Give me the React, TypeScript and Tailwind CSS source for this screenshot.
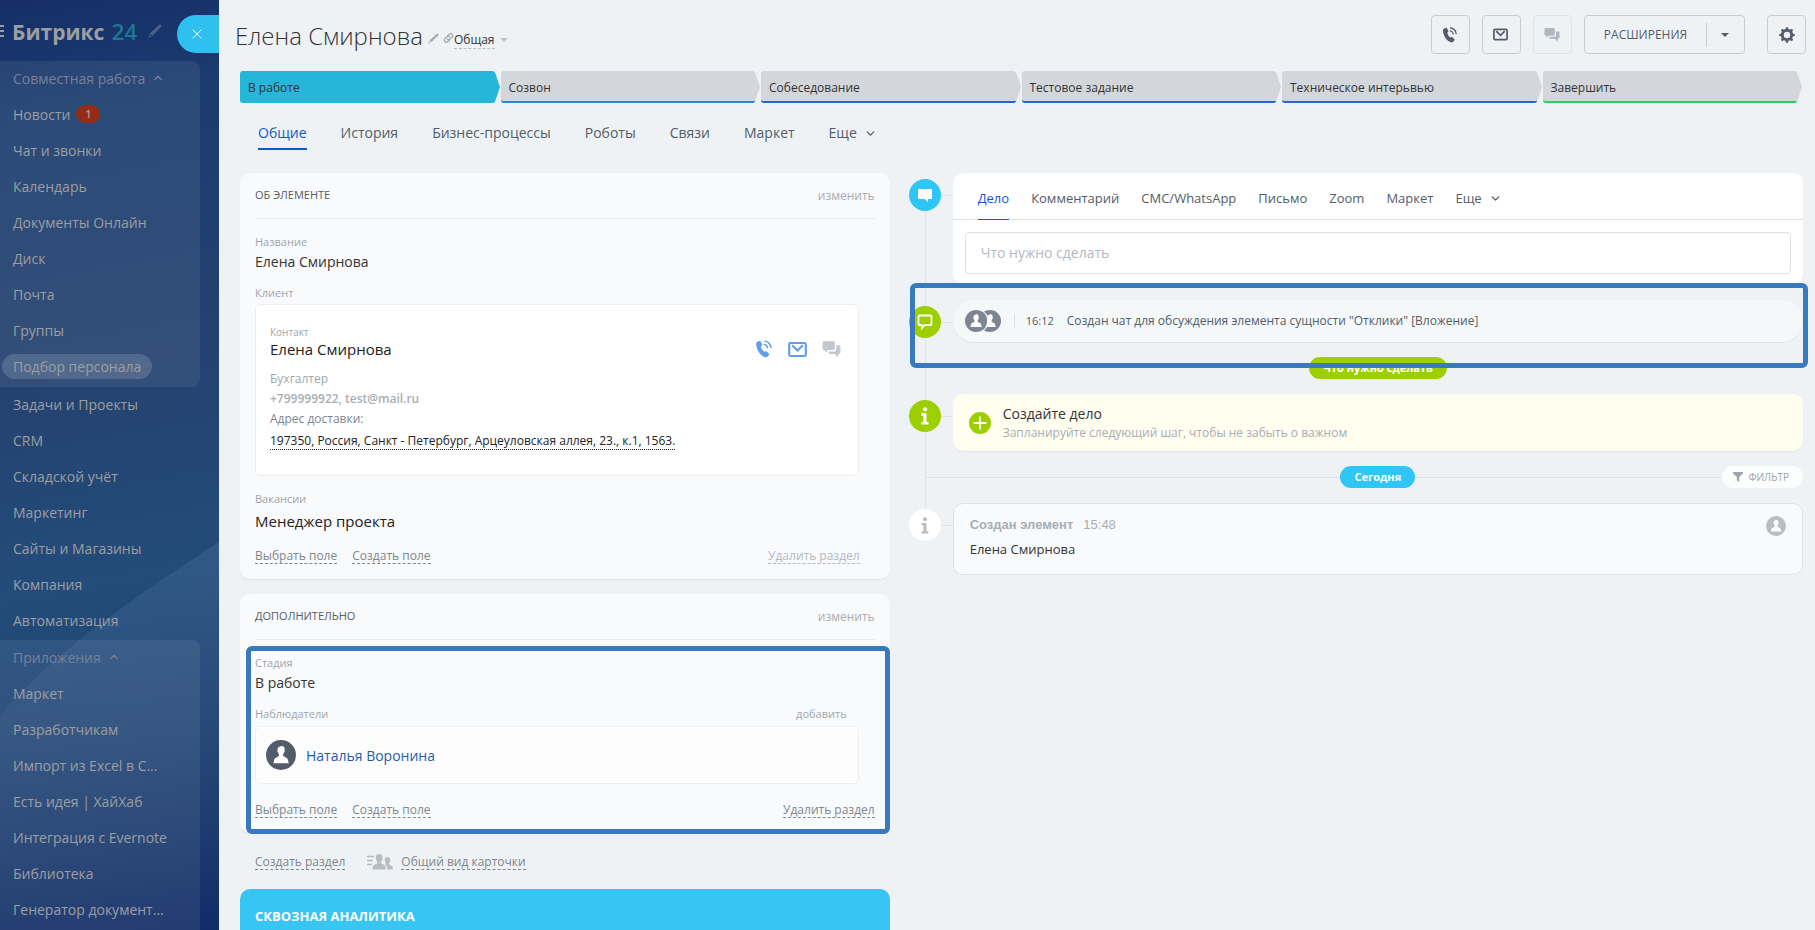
import type { ReactNode } from "react";
import { ChevronDown, ChevronUp, X } from "lucide-react";

type IconProps = { className?: string };

function PhoneIcon({ className }: IconProps) {
  return (
    <svg viewBox="0 0 16 16" className={className} aria-hidden="true">
      <path
        fill="currentColor"
        d="M2.200 1.600 4 .9c.4-.1.8 0 1 .4l1.300 2.500c.2.4.1.9-.2 1.200l-.9.7c.4 1.700 1.700 3.800 3.100 4.800l1-.5c.4-.2.9-.1 1.200.2l1.900 2.100c.3.3.3.8 0 1.100l-1.300 1.400c-.5.5-1.300.7-2 .5C4.900 14.200 1.300 8.900 1 3.700c0-.9.4-1.700 1.200-2.100z"
      />
      <path d="M8.300 3.900c1.500.3 2.600 1.500 2.900 3M8.600 1c2.900.4 5.100 2.600 5.500 5.500" fill="none" stroke="currentColor" strokeWidth="1.300" strokeLinecap="round" />
    </svg>
  );
}

function MailIcon({ className }: IconProps) {
  return (
    <svg viewBox="0 0 16 16" className={className} aria-hidden="true">
      <rect x="1" y="2.500" width="14" height="11" rx="1.200" fill="none" stroke="currentColor" strokeWidth="1.800" />
      <path d="m3.500 4.500 4.500 4.300 4.500-4.300" fill="none" stroke="currentColor" strokeWidth="1.800" />
    </svg>
  );
}

function ChatsIcon({ className }: IconProps) {
  return (
    <svg viewBox="0 0 16 16" className={className} aria-hidden="true">
      <path
        fill="currentColor"
        d="M1.600 1h8c.7 0 1.200.5 1.200 1.200v5c0 .7-.5 1.200-1.200 1.200H5L2.500 10.800V8.400h-.9C1 8.400.5 7.900.5 7.200v-5C.5 1.500 1 1 1.600 1z"
      />
      <path fill="currentColor" d="M12 4.400h2.300c.7 0 1.200.5 1.200 1.200v5c0 .7-.5 1.200-1.200 1.200h-.8v2.900l-2.700-2.900H6.700c-.7 0-1.200-.5-1.200-1.200v-.9h5.300c.7 0 1.200-.5 1.200-1.200z" />
    </svg>
  );
}

function GearIcon({ className }: IconProps) {
  const teeth = [0, 45, 90, 135, 180, 225, 270, 315];
  return (
    <svg viewBox="0 0 16 16" className={className} aria-hidden="true">
      <circle cx="8" cy="8" r="4.700" fill="none" stroke="currentColor" strokeWidth="2.900" />
      {teeth.map((a) => (
        <path key={a} d="M6.500 2.600 7 .3h2l.5 2.300z" fill="currentColor" transform={`rotate(${a} 8 8)`} />
      ))}
    </svg>
  );
}

function PencilIcon({ className }: IconProps) {
  return (
    <svg viewBox="0 0 14 14" className={className} aria-hidden="true">
      <path fill="currentColor" d="M11.200.8c.4-.4 1-.4 1.400 0l.6.6c.4.4.4 1 0 1.400L4.300 11.700 1.700 9.700zM1 10.600l2.300 1.900L.5 13.500z" />
    </svg>
  );
}

function LinkIcon({ className }: IconProps) {
  return (
    <svg viewBox="0 0 12 12" className={className} aria-hidden="true">
      <g fill="none" stroke="currentColor" strokeWidth="1.500" strokeLinecap="round">
        <path d="M5 3.600 6.700 1.900a2.200 2.200 0 0 1 3.200 0 2.200 2.200 0 0 1 0 3.200L7.800 7.200a2.200 2.200 0 0 1-3 0" />
        <path d="M7 8.300 5.300 10a2.200 2.200 0 0 1-3.200 0 2.200 2.200 0 0 1 0-3.200l2.100-2.100a2.200 2.200 0 0 1 3 0" />
      </g>
    </svg>
  );
}

function Avatar({ className }: IconProps) {
  return (
    <svg viewBox="0 0 30 30" className={className} aria-hidden="true">
      <circle cx="15" cy="15" r="15" fill="currentColor" />
      <path
        fill="#fff"
        d="M14.200 6.400c.5-.6 2-.7 2.900-.2 1 .5 1.500 1.400 1.500 2.500 0 .7-.1 1.300-.1 1.800.5.400.4 1.300-.3 1.800-.2.8-.6 1.400-1.100 1.900v1.400c.3.8 1.100 1.100 2.200 1.600 1.600.7 2.300 1.300 2.600 2.500l.9 3.500H7.400l.8-3.500c.3-1.200 1-1.800 2.600-2.500 1.100-.5 1.900-.8 2.200-1.600v-1.400c-.5-.5-.9-1.100-1.100-1.900-.7-.5-.8-1.400-.3-1.800-.2-1.900 0-3.700 2.600-4.100z"
      />
    </svg>
  );
}

function PeopleListIcon({ className }: IconProps) {
  return (
    <svg viewBox="0 0 26 18" className={className} aria-hidden="true">
      <path d="M0 3.500h7M0 7.500h6M0 11.500h5" stroke="currentColor" strokeWidth="1.500" />
      <path fill="currentColor" d="M12.200 1c-2 0-3.400 1.200-3.400 3.300 0 2.200.7 3.700 1.500 4.600.3 1.600-.8 1.900-2.400 2.600-1.700.7-2.400 2.400-2.500 5h13.600c-.1-2.600-.8-4.300-2.500-5-1.600-.7-2.700-1-2.400-2.600.8-.9 1.500-2.400 1.500-4.600C15.600 2.200 14.200 1 12.200 1z" />
      <path fill="currentColor" d="M20.500 4c1.700 0 2.800 1 2.800 2.800 0 1.700-.5 2.800-1.200 3.500-.2 1.300.6 1.600 1.900 2.100 1.400.5 2 1.900 2 4.100h-5.600c-.1-2.300-.9-4-2.600-4.900 1-.5 1-1 .9-1.500-.6-.6-1-1.700-1-3.300C17.700 5 18.800 4 20.500 4z" />
    </svg>
  );
}

function InfoIcon({ className }: IconProps) {
  return (
    <svg viewBox="0 0 10 18" className={className} aria-hidden="true">
      <circle cx="5" cy="2.300" r="2.100" fill="currentColor" />
      <path fill="currentColor" d="M1.300 6.300h5.200v8.800h2v2.400H1.300v-2.400h2V8.700h-2z" />
    </svg>
  );
}

function SectionHeading({ title }: { title: string }) {
  return (
    <div className="flex h-[46px] items-center justify-between border-b border-[#e6e9ec]">
      <h2 className="text-[11px] font-medium text-[#535c69]">{title}</h2>
      <button type="button" className="text-[12px] text-[#a8adb4]">изменить</button>
    </div>
  );
}

function Dashed({ children, className = "text-[#80868e]" }: { children: ReactNode; className?: string }) {
  return (
    <a href="#" className={`border-b border-dashed border-current text-[12px] leading-[15px] ${className}`}>
      {children}
    </a>
  );
}

const collab = ["Новости", "Чат и звонки", "Календарь", "Документы Онлайн", "Диск", "Почта", "Группы"];
const general = ["Задачи и Проекты", "CRM", "Складской учёт", "Маркетинг", "Сайты и Магазины", "Компания", "Автоматизация"];
const apps = ["Маркет", "Разработчикам", "Импорт из Excel в С...", "Есть идея | ХайХаб", "Интеграция с Evernote", "Библиотека", "Генератор документ..."];

function MenuLink({ label, badge }: { label: string; badge?: string }) {
  return (
    <a href="#" className="flex h-9 items-center gap-[6px] pb-[2px] pl-[13px]">
      {label}
      {badge && (
        <span className="flex h-[18px] w-6 items-center justify-center rounded-full bg-[#962c14] text-[11px] font-semibold">{badge}</span>
      )}
    </a>
  );
}

function Sidebar() {
  return (
    <aside className="relative w-[219px] shrink-0 overflow-hidden bg-[linear-gradient(170deg,#162e68_0%,#1a3c6e_12%,#24426f_40%,#234c7b_62%,#1e4170_80%,#122c66_100%)] text-[14px] font-medium text-[#9d9ea0]">
      <svg viewBox="0 0 219 930" preserveAspectRatio="none" className="absolute inset-0 h-full w-full" aria-hidden="true">
        <defs>
          <linearGradient id="glow" x1="0" y1="0" x2="0" y2="1">
            <stop offset="0" stopColor="#8fb0d8" stopOpacity=".13" />
            <stop offset="1" stopColor="#8fb0d8" stopOpacity="0" />
          </linearGradient>
        </defs>
        <path d="M219 542C130 600 50 655 0 716v214h219z" fill="url(#glow)" />
      </svg>
      <div className="relative">
        <div className="flex h-[61px] items-center">
          <button type="button" aria-label="Меню" className="flex h-3 w-1 flex-col justify-between">
            <span className="h-[2px] bg-current" />
            <span className="h-[2px] bg-current" />
            <span className="h-[2px] bg-current" />
          </button>
          <a href="#" className="ml-2 pt-[2px] text-[21px] font-bold">
            Битрикс <span className="ml-[2px] text-[22px] font-semibold text-[#1d7895]">24</span>
          </a>
          <PencilIcon className="ml-[11px] h-[14px] w-[14px] text-[#4c6288]" />
        </div>
        <button type="button" aria-label="Закрыть" className="absolute top-[15px] right-0 flex h-[38px] w-[42px] items-center justify-center rounded-l-full bg-[#2fc0f0] pr-[2px] text-white">
          <X size={16} strokeWidth={1.500} />
        </button>
        <nav>
          <div className="mr-[19px] rounded-r-lg bg-white/7 pb-[2px]">
            <button type="button" className="flex h-9 items-center gap-[6px] pb-[2px] pl-[13px] font-normal text-[#75819a]">
              Совместная работа <ChevronUp size={14} />
            </button>
            {collab.map((l) => (
              <MenuLink key={l} label={l} badge={l === "Новости" ? "1" : undefined} />
            ))}
            <div className="flex h-9 items-center pb-[2px] pl-[2px]">
              <a href="#" aria-current="page" className="flex h-[25px] items-center rounded-full bg-white/15 px-[11px]">
                Подбор персонала
              </a>
            </div>
          </div>
          {general.map((l) => (
            <MenuLink key={l} label={l} />
          ))}
          <div className="mt-px mr-[19px] rounded-tr-lg bg-white/7 pb-9">
            <button type="button" className="flex h-9 items-center gap-[6px] pb-[2px] pl-[13px] font-normal text-[#75819a]">
              Приложения <ChevronUp size={14} />
            </button>
            {apps.map((l) => (
              <MenuLink key={l} label={l} />
            ))}
          </div>
        </nav>
      </div>
    </aside>
  );
}

const stages = [
  { name: "В работе", fill: "#25b6d9", line: "#25b6d9" },
  { name: "Созвон", fill: "#d3d7dc", line: "#2b85d6" },
  { name: "Собеседование", fill: "#d3d7dc", line: "#2566d0" },
  { name: "Тестовое задание", fill: "#d3d7dc", line: "#2566d0" },
  { name: "Техническое интерьвью", fill: "#d3d7dc", line: "#2566d0" },
  { name: "Завершить", fill: "#d3d7dc", line: "#2bcf5c" },
];

function Stages() {
  return (
    <ol className="mr-px grid h-8 grid-cols-6 gap-px text-[12px] text-[#333]">
      {stages.map((s) => (
        <li key={s.name} className="min-w-0">
          <button type="button" className="flex h-full w-full text-left">
            <span className="flex h-8 min-w-0 flex-1 items-center truncate rounded-l-[3px] border-b-2 pt-[3px] pl-2" style={{ backgroundColor: s.fill, borderColor: s.line }}>
              {s.name}
            </span>
            <svg viewBox="0 0 8 32" className="h-8 w-2 shrink-0" aria-hidden="true">
              <path d="M0 0c2 0 3 1 3.600 3L8 16 3.600 29C3 31 2 32 0 32z" fill={s.fill} />
              <path d="M0 30h3.200C2.600 31.400 1.600 32 0 32z" fill={s.line} />
            </svg>
          </button>
        </li>
      ))}
    </ol>
  );
}

const toolButton = "flex h-[39px] w-[39px] items-center justify-center rounded border text-[#535c69]";

function Header() {
  return (
    <header className="-mr-[3px] flex h-[71px] items-start justify-between pt-[15px]">
      <div className="-ml-[5px] flex items-center pt-[3px]">
        <h1 className="text-[24px] leading-[36px] font-light text-[#333]">Елена Смирнова</h1>
        <button type="button" aria-label="Переименовать" className="mt-[4px] ml-[5px] text-[#a8adb4]"><PencilIcon className="h-[11px] w-[11px]" /></button>
        <button type="button" aria-label="Скопировать ссылку" className="mt-[4px] ml-[4px] text-[#a8adb4]"><LinkIcon className="h-[12px] w-[11px]" /></button>
        <button type="button" className="mt-[7px] flex items-center gap-[5px] text-[12px] leading-[17px] text-[#333]">
          <span className="border-b border-dashed border-[#b8bdc4]">Общая</span>
          <svg viewBox="0 0 8 4" className="h-1 w-2 text-[#c0c5cb]" aria-hidden="true"><path d="M0 0h8L4 4z" fill="currentColor" /></svg>
        </button>
      </div>
      <div className="flex gap-3">
        <button type="button" aria-label="Позвонить" className={`${toolButton} border-[#c6cdd3] pr-[2px]`}><PhoneIcon className="h-4 w-4" /></button>
        <button type="button" aria-label="Написать письмо" className={`${toolButton} border-[#c6cdd3] pr-[2px]`}><MailIcon className="h-[15px] w-[15px]" /></button>
        <button type="button" aria-label="Чат" disabled className={`${toolButton} border-[#dfe3e7] pr-[2px]`}><ChatsIcon className="h-4 w-4 text-[#b0b6bd]" /></button>
        <div className="mr-[10px] flex h-[39px] w-[161px] items-center rounded border border-[#c6cdd3] text-[#535c69]">
          <button type="button" className="h-full flex-1 text-[12px]">РАСШИРЕНИЯ</button>
          <span className="h-6 w-px bg-[#c6cdd3]" />
          <button type="button" aria-label="Ещё" className="flex h-full w-[37px] items-center justify-center pr-[2px]">
            <svg viewBox="0 0 8 4" className="h-1 w-2" aria-hidden="true"><path d="M0 0h8L4 4z" fill="currentColor" /></svg>
          </button>
        </div>
        <button type="button" aria-label="Настройки" className={`${toolButton} border-[#c6cdd3]`}><GearIcon className="h-4 w-4" /></button>
      </div>
    </header>
  );
}

const tabs = ["Общие", "История", "Бизнес-процессы", "Роботы", "Связи", "Маркет"];

function PageTabs() {
  return (
    <nav className="flex gap-[34px] pt-5 pl-[18px] text-[14px] leading-[20px] text-[#535c69]">
      {tabs.map((t, i) => (
        <a key={t} href="#" className={`h-[27px] border-b-2 ${i === 0 ? "border-[#1058d0] text-[#1058d0]" : "border-transparent"}`}>
          {t}
        </a>
      ))}
      <button type="button" className="flex h-5 items-center gap-[7px]">Еще <ChevronDown size={13} strokeWidth={2.500} /></button>
    </nav>
  );
}

const fieldLabel = "text-[11px] leading-[16px] text-[#a0a5ad]";

function AboutCard() {
  return (
    <section className="rounded-[10px] bg-[#f9fafb] px-[15px] pb-[15px] shadow-[0_1px_1px_rgba(0,0,0,0.06)]">
      <SectionHeading title="ОБ ЭЛЕМЕНТЕ" />
      <p className={`mt-[15px] ${fieldLabel}`}>Название</p>
      <p className="mt-[2px] text-[14px] leading-[20px] text-[#333]">Елена Смирнова</p>
      <p className={`mt-[13px] ${fieldLabel}`}>Клиент</p>
      <div className="mt-[3px] mr-4 h-[172px] rounded-[5px] border border-[#edeff1] bg-white px-[14px] pt-[20px]">
        <p className="text-[10px] leading-[14px] text-[#a0a5ad]">Контакт</p>
        <div className="flex items-center justify-between">
          <a href="#" className="text-[15px] leading-[20px] text-[#222]">Елена Смирнова</a>
          <div className="flex items-center gap-[15px] pr-[3px]">
            <button type="button" aria-label="Позвонить" className="text-[#5f9ee8]"><PhoneIcon className="h-[18px] w-[18px]" /></button>
            <button type="button" aria-label="Написать письмо" className="text-[#5f9ee8]"><MailIcon className="h-[19px] w-[19px]" /></button>
            <button type="button" aria-label="Чат" disabled className="text-[#c3c8cd]"><ChatsIcon className="h-[19px] w-[19px]" /></button>
          </div>
        </div>
        <p className="mt-[10px] text-[12px] leading-[20px] text-[#a0a5ad]">Бухгалтер</p>
        <p className="text-[12px] leading-[20px] font-semibold text-[#a8adb4]">+799999922, test@mail.ru</p>
        <p className="text-[12px] leading-[20px] text-[#80868e]">Адрес доставки:</p>
        <p className="mt-[4px] text-[12px] leading-[15px] text-[#222]">
          <a href="#" className="border-b border-dotted border-current">197350, Россия, Санкт - Петербург, Арцеуловская аллея, 23., к.1, 1563.</a>
        </p>
      </div>
      <p className={`mt-[15px] ${fieldLabel}`}>Вакансии</p>
      <p className="mt-1 text-[15px] leading-[20px] text-[#222]">Менеджер проекта</p>
      <div className="mt-[17px] flex gap-[15px]">
        <Dashed>Выбрать поле</Dashed>
        <Dashed>Создать поле</Dashed>
        <Dashed className="mr-[15px] ml-auto text-[#b4b9bf]">Удалить раздел</Dashed>
      </div>
    </section>
  );
}

function ExtraCard() {
  return (
    <section className="relative mt-[15px] rounded-[10px] bg-[#f9fafb] px-[15px] pb-[15px] shadow-[0_1px_1px_rgba(0,0,0,0.06)]">
      <SectionHeading title="ДОПОЛНИТЕЛЬНО" />
      <p className={`mt-[15px] ${fieldLabel}`}>Стадия</p>
      <p className="mt-[2px] text-[14px] leading-[20px] text-[#333]">В работе</p>
      <div className={`mt-[13px] mr-7 flex justify-between ${fieldLabel}`}>
        <p>Наблюдатели</p>
        <button type="button">добавить</button>
      </div>
      <div className="mt-[4px] mr-4 flex h-[58px] items-center gap-[10px] rounded-[5px] border border-[#edeff1] bg-[#fdfdfd] px-[10px]">
        <Avatar className="h-[30px] w-[30px] text-[#535c69]" />
        <a href="#" className="text-[14px] text-[#1f5cad]">Наталья Воронина</a>
      </div>
      <div className="mt-[18px] flex gap-[15px]">
        <Dashed>Выбрать поле</Dashed>
        <Dashed>Создать поле</Dashed>
        <Dashed className="ml-auto text-[#80868e]">Удалить раздел</Dashed>
      </div>
      <div className="pointer-events-none absolute top-[52px] right-0 -bottom-px left-[6px] rounded-[6px] border-[5px] border-[#3979be]" />
    </section>
  );
}

function TimelineRow({ icon, tone, children, className }: { icon: ReactNode; tone: string; children: ReactNode; className: string }) {
  return (
    <div className={`flex items-start ${className}`}>
      <span className={`mt-[6px] flex h-8 w-8 shrink-0 items-center justify-center rounded-full ${tone}`}>{icon}</span>
      <span className="mt-[22px] h-px w-3 shrink-0 bg-[#dfe3e7]" />
      {children}
    </div>
  );
}

const activityTabs = ["Дело", "Комментарий", "СМС/WhatsApp", "Письмо", "Zoom", "Маркет"];

function Timeline() {
  return (
    <div className="relative -ml-px">
      <div className="absolute top-6 left-4 h-[316px] w-px bg-[#dfe3e7]" />
      <div className="relative">
        <TimelineRow
          className="h-[110px]"
          tone="bg-[#2fc6f6] text-white"
          icon={<svg viewBox="0 0 14 13" className="h-[13px] w-[14px]" aria-hidden="true"><path d="M1 0h12c.6 0 1 .4 1 1v8c0 .6-.4 1-1 1h-3v3L6.500 10H1c-.6 0-1-.4-1-1V1c0-.6.4-1 1-1z" fill="currentColor" /></svg>}
        >
          <section className="min-w-0 flex-1 rounded-[10px] bg-white pb-[10px]">
            <nav className="flex h-[47px] gap-[22px] border-b border-[#dfe3e7] pl-[25px] text-[13px] text-[#535c69]">
              {activityTabs.map((t, i) => (
                <a key={t} href="#" className={`-mb-px flex items-center border-b pt-[5px] ${i === 0 ? "border-[#1058d0] text-[#1058d0]" : "border-transparent"}`}>{t}</a>
              ))}
              <button type="button" className="flex items-center gap-[7px] pt-[5px]">Еще <ChevronDown size={13} strokeWidth={2.500} /></button>
            </nav>
            <div className="px-3 pt-3">
              <input aria-label="Что нужно сделать" placeholder="Что нужно сделать" className="h-[42px] w-full rounded border border-[#dcdfe3] px-[15px] pb-[2px] text-[14px] placeholder:text-[#b4b9bf]" />
            </div>
          </section>
        </TimelineRow>

        <TimelineRow
          className="relative pt-[17px]"
          tone="bg-[#9dcf00] text-white"
          icon={<svg viewBox="0 0 16 16" className="h-4 w-4" aria-hidden="true"><path d="M2.500 1.500h11c.6 0 1 .4 1 1v7.600c0 .6-.4 1-1 1H7.300L5 14v-2.900H2.500c-.6 0-1-.4-1-1V2.500c0-.6.4-1 1-1z" fill="none" stroke="currentColor" strokeWidth="1.800" /></svg>}
        >
          <div className="flex h-[42px] min-w-0 flex-1 items-center rounded-full bg-[#f5f8f9] pl-3 text-[12px] text-[#535c69] shadow-[0_1px_1px_rgba(0,0,0,0.06)]">
            <div className="flex">
              <span className="z-10 rounded-full border-r-2 border-[#f5f8f9]"><Avatar className="h-[22px] w-[22px] text-[#7c8591]" /></span>
              <Avatar className="-ml-[10px] h-[22px] w-[22px] text-[#7c8591]" />
            </div>
            <span className="ml-[13px] h-[14px] w-px bg-[#dfe3e7]" />
            <time className="ml-[11px] text-[11px]">16:12</time>
            <p className="ml-[13px]">Создан чат для обсуждения элемента сущности "Отклики" [Вложение]</p>
          </div>
          <div className="pointer-events-none absolute top-0 -right-[5px] -bottom-[26px] left-px z-20 rounded-[6px] border-[5px] border-[#3979be]" />
        </TimelineRow>

        <div className="mt-[15px] flex justify-center pl-[44px]">
          <span className="flex h-[22px] items-center rounded-full bg-[#9dcf00] px-[14px] text-[11px] font-bold text-white">Что нужно сделать</span>
        </div>

        <TimelineRow className="mt-[15px]" tone="bg-[#9dcf00] text-white" icon={<InfoIcon className="h-[18px] w-[10px]" />}>
          <div className="flex h-[57px] min-w-0 flex-1 items-center gap-3 rounded-[10px] bg-[#fffeef] pl-4 shadow-[0_1px_1px_rgba(0,0,0,0.06)]">
            <button type="button" aria-label="Создать дело">
              <svg viewBox="0 0 22 22" className="h-[22px] w-[22px]" aria-hidden="true">
                <circle cx="11" cy="11" r="11" fill="#9dcf00" />
                <path d="M11 4.500v13M4.500 11h13" stroke="#fff" strokeWidth="1.800" />
              </svg>
            </button>
            <div>
              <p className="text-[14px] leading-[20px] text-[#333]">Создайте дело</p>
              <p className="text-[12px] leading-[18px] text-[#a8adb4]">Запланируйте следующий шаг, чтобы не забыть о важном</p>
            </div>
          </div>
        </TimelineRow>

        <div className="mt-[15px] ml-4 flex items-center">
          <span className="h-px w-7 bg-[#dfe3e7]" />
          <div className="grid flex-1 grid-cols-[1fr_auto_1fr] items-center">
            <span className="h-px bg-[#dfe3e7]" />
            <span className="flex h-[22px] items-center rounded-full bg-[#2fc6f6] px-[14px] text-[11px] font-bold text-white">Сегодня</span>
            <div className="flex items-center">
              <span className="h-px flex-1 bg-[#dfe3e7]" />
              <button type="button" className="flex h-[22px] items-center gap-[6px] rounded-full bg-[#fcfdfd] pr-[14px] pl-[11px] text-[10px] text-[#a0a5ad]">
                <svg viewBox="0 0 10 10" className="h-[10px] w-[10px]" aria-hidden="true"><path d="M0 0h10v1.500L6.300 5v5L3.800 8.300V5L0 1.500z" fill="currentColor" /></svg>
                ФИЛЬТР
              </button>
            </div>
          </div>
        </div>

        <TimelineRow className="mt-[15px]" tone="bg-white text-[#b8bdc4]" icon={<InfoIcon className="h-[17px] w-[10px]" />}>
          <article className="flex min-w-0 flex-1 items-start justify-between rounded-[10px] border border-[#dfe3e7] bg-[#f9fafb] px-4 pt-3 pb-4">
            <div>
              <p className="flex gap-[10px] font-['Liberation_Sans',sans-serif] text-[13px] leading-[18px] text-[#a8adb4]"><b>Создан элемент</b><time>15:48</time></p>
              <p className="mt-[6px] text-[13px] leading-[18px] text-[#333]">Елена Смирнова</p>
            </div>
            <Avatar className="h-5 w-5 text-[#b8bdc4]" />
          </article>
        </TimelineRow>
      </div>
    </div>
  );
}

export default function App() {
  return (
    <div className="flex h-screen overflow-hidden bg-[#eef2f4] font-['Open_Sans','Noto_Sans',sans-serif]">
      <Sidebar />
      <main className="min-w-0 flex-1 pr-3 pl-[21px]">
        <Header />
        <Stages />
        <PageTabs />
        <div className="mt-[23px] grid grid-cols-[minmax(0,8fr)_minmax(0,11fr)] gap-5">
          <div>
            <AboutCard />
            <ExtraCard />
            <div className="mt-[20px] flex h-[17px] items-center pl-[15px]">
              <Dashed>Создать раздел</Dashed>
              <PeopleListIcon className="mr-2 ml-[22px] h-[18px] w-[26px] text-[#b8bdc4]" />
              <Dashed>Общий вид карточки</Dashed>
            </div>
            <section className="mt-[19px] h-[120px] rounded-[10px] bg-[#39c5f4] px-[15px] pt-[17px]">
              <h2 className="text-[13px] leading-[20px] font-bold text-white">СКВОЗНАЯ АНАЛИТИКА</h2>
            </section>
          </div>
          <Timeline />
        </div>
      </main>
    </div>
  );
}
